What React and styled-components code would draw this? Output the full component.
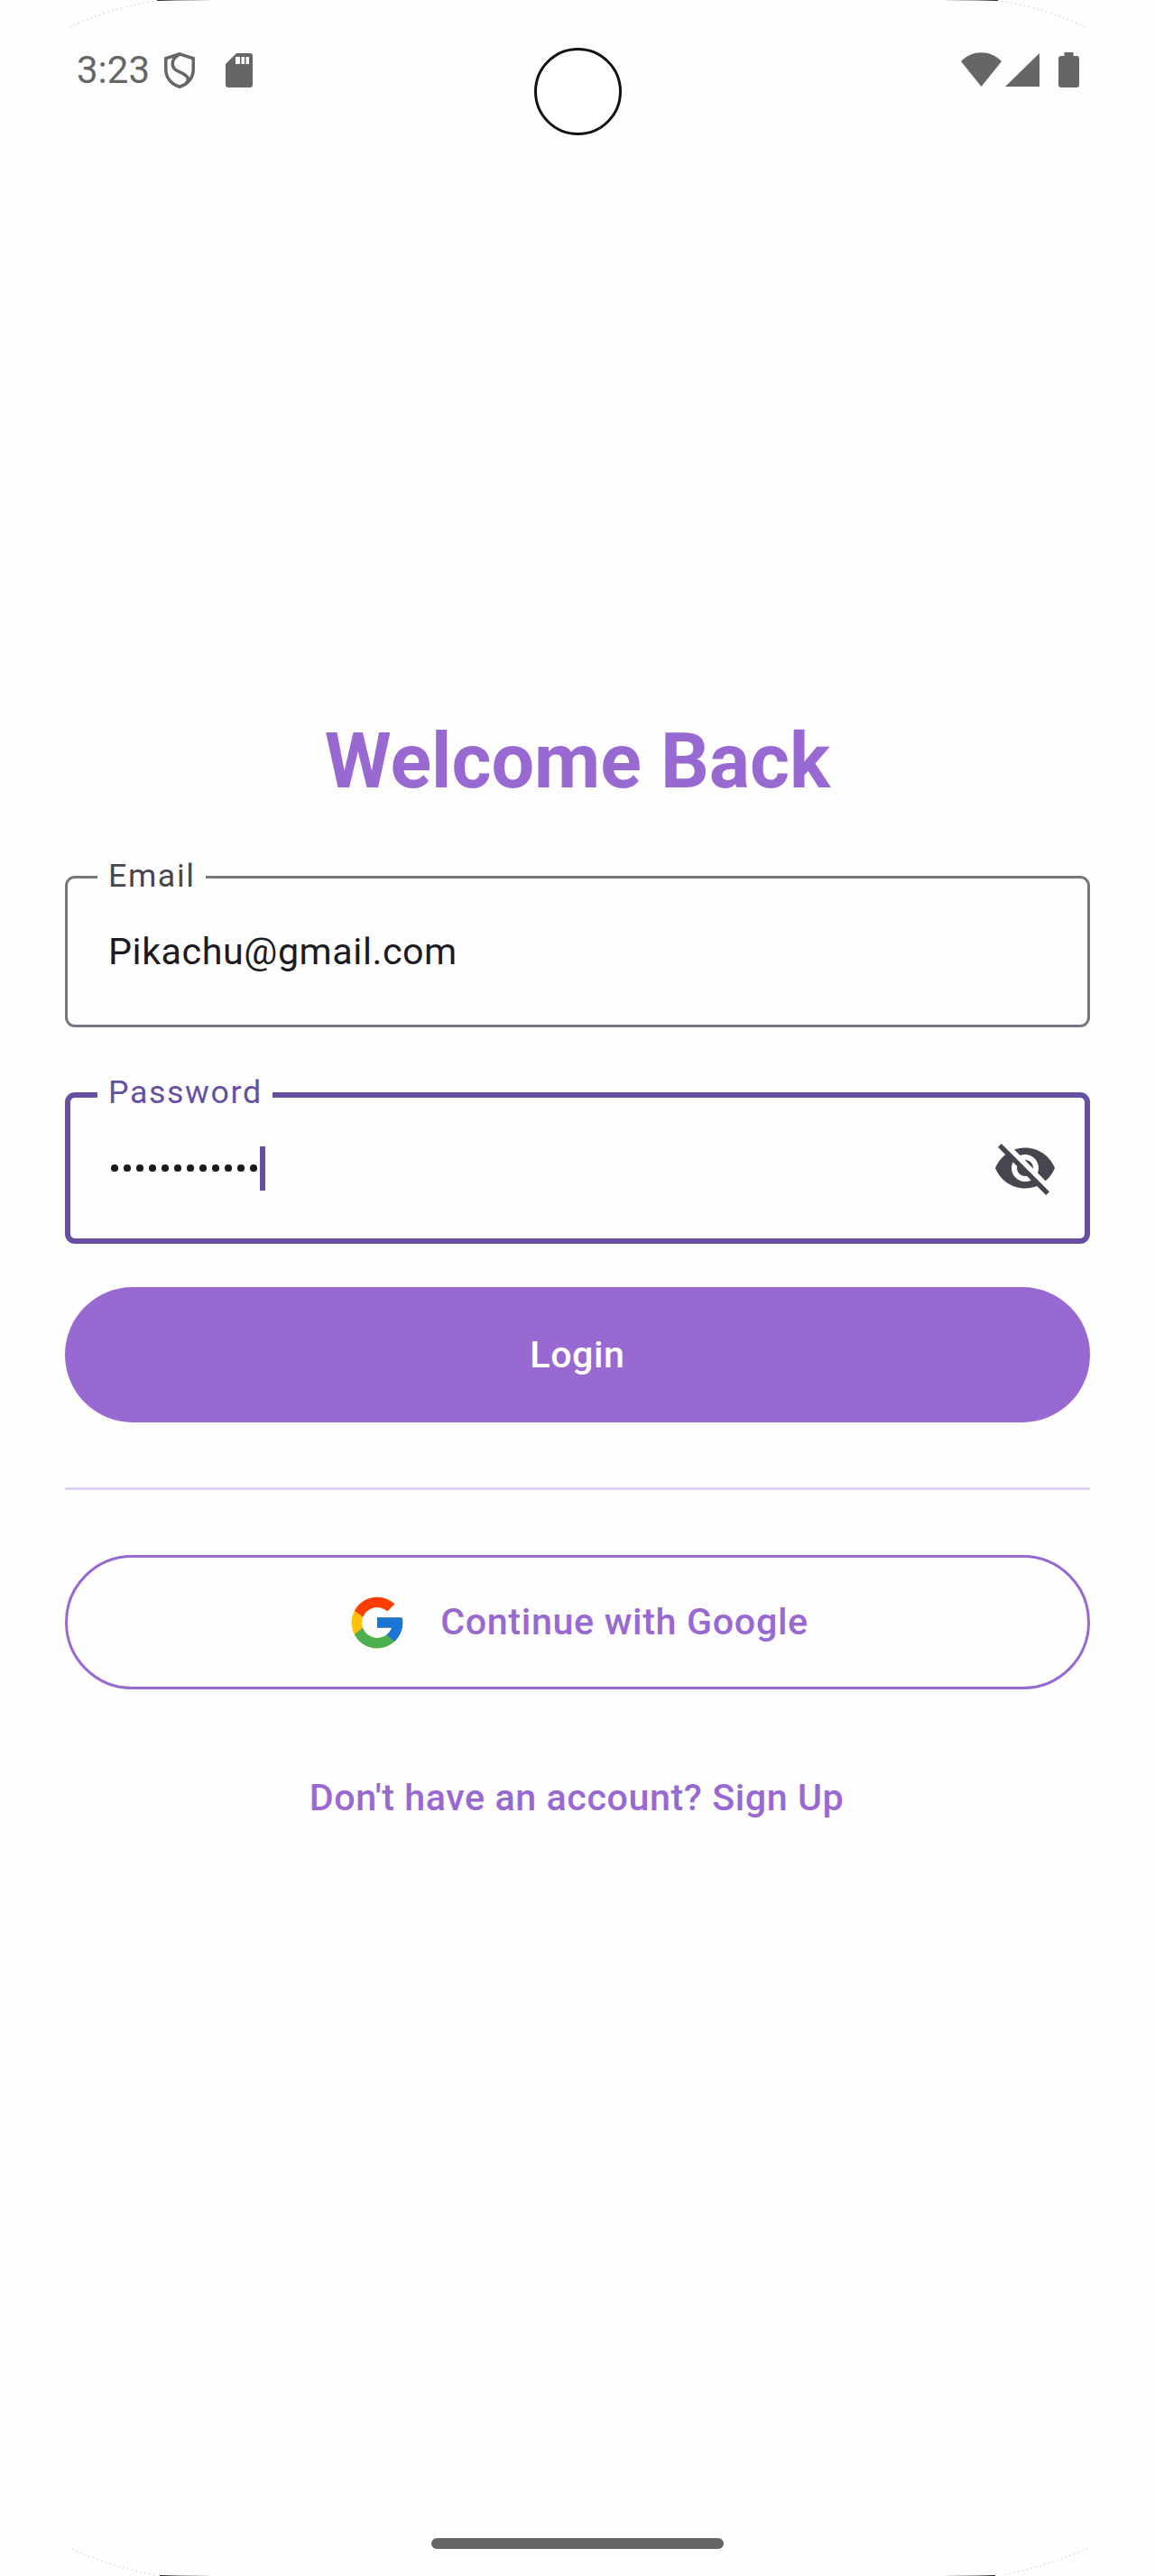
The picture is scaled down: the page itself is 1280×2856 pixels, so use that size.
import React from "react";
import styled, { createGlobalStyle } from "styled-components";

const Global = createGlobalStyle`
  html, body { margin: 0; padding: 0; background: #fffefe; }
  * { box-sizing: border-box; }
  body { font-family: Roboto, "Liberation Sans", sans-serif; }
`;

const Screen = styled.div`
  position: relative;
  width: 1280px;
  height: 2856px;
  overflow: hidden;
  background: #fffefe;
  display: flex;
  flex-direction: column;
`;

const StatusBar = styled.div`
  height: 110px;
  padding: 56px 84px 0 85px;
  display: flex;
  align-items: flex-start;
  justify-content: space-between;
  color: #666666;
`;

const StatusGroup = styled.div`
  display: flex;
  align-items: flex-start;
  gap: ${(p) => p.$gap}px;
`;

const Time = styled.span`
  font-size: 42px;
  line-height: 45px;
  color: #666666;
  width: 97px;
  margin-top: -1px;
`;

const Camera = styled.div`
  position: absolute;
  left: 592px;
  top: 53px;
  width: 97px;
  height: 97px;
  border-radius: 50%;
  border: 3px solid #111;
  background: #fff;
`;

const Edges = styled.svg`
  position: absolute;
  inset: 0;
  pointer-events: none;
`;

const Form = styled.main`
  padding: 686px 72px 0;
  display: flex;
  flex-direction: column;
`;

const Title = styled.h1`
  margin: 0;
  font-size: 84.5px;
  line-height: 97px;
  font-weight: 700;
  color: #9969d2;
  text-align: center;
`;

const Field = styled.div`
  position: relative;
  height: 168px;
  margin-top: ${(p) => p.$top}px;
  border-radius: 11px;
  border: ${(p) => (p.$focused ? "6px solid #6750a4" : "3px solid #79747e")};
  display: flex;
  align-items: center;
  padding-left: ${(p) => (p.$focused ? 45 : 45)}px;
`;

const Label = styled.label`
  position: absolute;
  left: ${(p) => (p.$focused ? 30 : 33)}px;
  top: ${(p) => (p.$focused ? -28.5 : -25)}px;
  padding: 0 11px 0 12px;
  background: #fffefe;
  font-size: 35.75px;
  line-height: 44px;
  letter-spacing: 1.6px;
  color: ${(p) => (p.$focused ? "#6750a4" : "#49454f")};
`;

const Value = styled.span`
  font-size: 41.25px;
  line-height: 66px;
  letter-spacing: 0.55px;
  color: #1c1b1f;
`;

const Dots = styled.span`
  display: flex;
  gap: 6.3px;
  align-items: center;
`;

const Dot = styled.i`
  width: 7.7px;
  height: 7.7px;
  border-radius: 50%;
  background: #1c1b1f;
`;

const Caret = styled.i`
  width: 6px;
  height: 49px;
  margin-left: -3.3px;
  background: #6750a4;
`;

const EyeButton = styled.span`
  position: absolute;
  right: 30px;
  top: 42px;
  width: 72px;
  height: 72px;
  color: #49454f;
`;

const PrimaryButton = styled.button`
  height: 150px;
  margin-top: 48px;
  border: 0;
  border-radius: 75px;
  background: #9969d2;
  color: #fff;
  font: 500 41.25px/45px Roboto, sans-serif;
  letter-spacing: 0.55px;
`;

const Divider = styled.hr`
  margin: 72px 0 0;
  border: 0;
  height: 3px;
  background: #e0d1f2;
`;

const OutlineButton = styled.button`
  height: 149px;
  margin-top: 72px;
  border: 3px solid #9969d2;
  border-radius: 75px;
  background: transparent;
  color: #9969d2;
  font: 500 41.25px/45px Roboto, sans-serif;
  letter-spacing: 0.65px;
  display: flex;
  align-items: center;
  justify-content: center;
  gap: 36px;
`;

const SignUp = styled.a`
  margin-top: 98px;
  margin-left: -2px;
  text-align: center;
  color: #9969d2;
  font: 500 41.25px/45px Roboto, sans-serif;
  letter-spacing: 0.55px;
`;

const HomeHandle = styled.div`
  position: absolute;
  left: 478px;
  top: 2814px;
  width: 324px;
  height: 12px;
  border-radius: 6px;
  background: #666666;
`;

const Shield = () => (
  <svg width="34" height="40" viewBox="0 0 34 40" fill="none" stroke="#666" strokeWidth="3.5" style={{ marginTop: 2, marginRight: 34 }}>
    <path d="M17 1.8 L32.2 6.8 V19 C32.2 28.5 26 35.5 17 38.2 C8 35.5 1.8 28.5 1.8 19 V6.8 Z" />
    <path d="M18 2 C10 5 7 12 11 18 C14 22 22 22 26 28 C27 31 26 33 24 35" />
  </svg>
);

const SdCard = () => (
  <svg width="30" height="38" viewBox="0 0 30 38" style={{ marginTop: 3 }}>
    <path fill="#666" d="M12 0 H27 Q30 0 30 3 V35 Q30 38 27 38 H3 Q0 38 0 35 V12 Z" />
    <path fill="#fff" d="M11 4 h5 v8 h-5 z M17.5 4 h3.5 v8 h-3.5 z M22.5 4 h3.5 v8 h-3.5 z" />
  </svg>
);

const Wifi = () => (
  <svg width="45" height="38" viewBox="0 0 45 38" style={{ marginTop: 2 }}>
    <path fill="#666" d="M0 10 C 12.5 -3 32.5 -3 45 10 L22.5 38 Z" />
  </svg>
);

const Signal = () => (
  <svg width="38" height="37" viewBox="0 0 38 37" style={{ marginTop: 3 }}>
    <path fill="#666" d="M38 0 V37 H0 Z" />
  </svg>
);

const Battery = () => (
  <svg width="23" height="39" viewBox="0 0 23 39" style={{ marginTop: 2, marginLeft: 17 }}>
    <path fill="#666" d="M6.5 0 H16.5 V4 H20 Q23 4 23 7 V36 Q23 39 20 39 H3 Q0 39 0 36 V7 Q0 4 3 4 H6.5 Z" />
  </svg>
);

const EyeOff = () => (
  <svg width="72" height="72" viewBox="0 0 24 24" fill="currentColor">
    <path d="M12 7c2.76 0 5 2.24 5 5 0 .65-.13 1.26-.36 1.83l2.92 2.92c1.51-1.26 2.7-2.89 3.43-4.75-1.73-4.39-6-7.5-11-7.5-1.4 0-2.74.25-3.98.7l2.16 2.16C10.74 7.13 11.35 7 12 7zM2 4.27l2.28 2.28.46.46C3.08 8.3 1.78 10.02 1 12c1.73 4.39 6 7.5 11 7.5 1.55 0 3.03-.3 4.38-.84l.42.42L19.73 22 21 20.73 3.27 3 2 4.27zM7.53 9.8l1.55 1.55c-.05.21-.08.43-.08.65 0 1.66 1.34 3 3 3 .22 0 .44-.03.65-.08l1.55 1.55c-.67.33-1.41.53-2.2.53-2.76 0-5-2.24-5-5 0-.79.2-1.53.53-2.2zm4.31-.78l3.15 3.15.02-.16c0-1.66-1.34-3-3-3l-.17.01z" />
  </svg>
);

const GoogleG = () => (
  <svg width="68" height="68" viewBox="0 0 48 48">
    <path fill="#FFC107" d="M43.6 20.1H42V20H24v8h11.3c-1.6 4.7-6.1 8-11.3 8-6.6 0-12-5.4-12-12s5.4-12 12-12c3.1 0 5.8 1.2 8 3l5.7-5.7C34 6.1 29.3 4 24 4 13 4 4 13 4 24s9 20 20 20 20-9 20-20c0-1.3-.1-2.7-.4-3.9z" />
    <path fill="#FF3D00" d="M6.3 14.7l6.6 4.8C14.7 15.1 19 12 24 12c3.1 0 5.8 1.2 8 3l5.7-5.7C34 6.1 29.3 4 24 4 16.3 4 9.7 8.3 6.3 14.7z" />
    <path fill="#4CAF50" d="M24 44c5.2 0 9.9-2 13.4-5.2l-6.2-5.2C29.2 35.1 26.7 36 24 36c-5.2 0-9.6-3.3-11.3-7.9l-6.5 5C9.5 39.6 16.2 44 24 44z" />
    <path fill="#1976D2" d="M43.6 20.1H42V20H24v8h11.3c-.8 2.2-2.2 4.2-4.1 5.6l6.2 5.2C37 39.2 44 34 44 24c0-1.3-.1-2.7-.4-3.9z" />
  </svg>
);

const EdgeMarks = () => (
  <Edges width="1280" height="2856" viewBox="0 0 1280 2856" fill="none">
    <defs>
      <linearGradient id="fadeL" x1="0" x2="1" y1="0" y2="0">
        <stop offset="0" stopColor="#222" />
        <stop offset="0.35" stopColor="#999" />
        <stop offset="1" stopColor="#eee" />
      </linearGradient>
      <linearGradient id="fadeR" x1="1" x2="0" y1="0" y2="0">
        <stop offset="0" stopColor="#222" />
        <stop offset="0.35" stopColor="#999" />
        <stop offset="1" stopColor="#eee" />
      </linearGradient>
    </defs>
    <rect x="174" y="0" width="58" height="1" fill="url(#fadeL)" />
    <rect x="1048" y="0" width="58" height="1" fill="url(#fadeR)" />
    <rect x="177" y="2855" width="55" height="1" fill="url(#fadeL)" />
    <rect x="1048" y="2855" width="55" height="1" fill="url(#fadeR)" />
    <g stroke="#aaa" strokeWidth="1" strokeDasharray="1 4">
      <path d="M78 30 Q120 10 170 1" />
      <path d="M1202 30 Q1160 10 1110 1" />
      <path d="M80 2826 Q120 2845 172 2855" />
      <path d="M1205 2826 Q1160 2845 1110 2855" />
    </g>
    <g stroke="#f4f4f4" strokeWidth="1" strokeDasharray="1 3">
      <path d="M2 162 Q10 110 35 72" />
      <path d="M1278 162 Q1270 110 1245 72" />
      <path d="M8 2724 Q15 2755 34 2782" />
      <path d="M1272 2724 Q1265 2755 1246 2782" />
    </g>
  </Edges>
);

export default function App() {
  return (
    <Screen>
      <Global />
      <StatusBar>
        <StatusGroup $gap={0}>
          <Time>3:23</Time>
          <Shield />
          <SdCard />
        </StatusGroup>
        <StatusGroup $gap={4}>
          <Wifi />
          <Signal />
          <Battery />
        </StatusGroup>
      </StatusBar>
      <Form>
        <Title>Welcome Back</Title>
        <Field $top={78}>
          <Label>Email</Label>
          <Value>Pikachu@gmail.com</Value>
        </Field>
        <Field $top={72} $focused>
          <Label $focused>Password</Label>
          <Dots>
            {Array.from({ length: 12 }, (_, i) => (
              <Dot key={i} />
            ))}
            <Caret />
          </Dots>
          <EyeButton>
            <EyeOff />
          </EyeButton>
        </Field>
        <PrimaryButton>Login</PrimaryButton>
        <Divider />
        <OutlineButton>
          <GoogleG />
          Continue with Google
        </OutlineButton>
        <SignUp>Don't have an account? Sign Up</SignUp>
      </Form>
      <Camera />
      <HomeHandle />
      <EdgeMarks />
    </Screen>
  );
}
